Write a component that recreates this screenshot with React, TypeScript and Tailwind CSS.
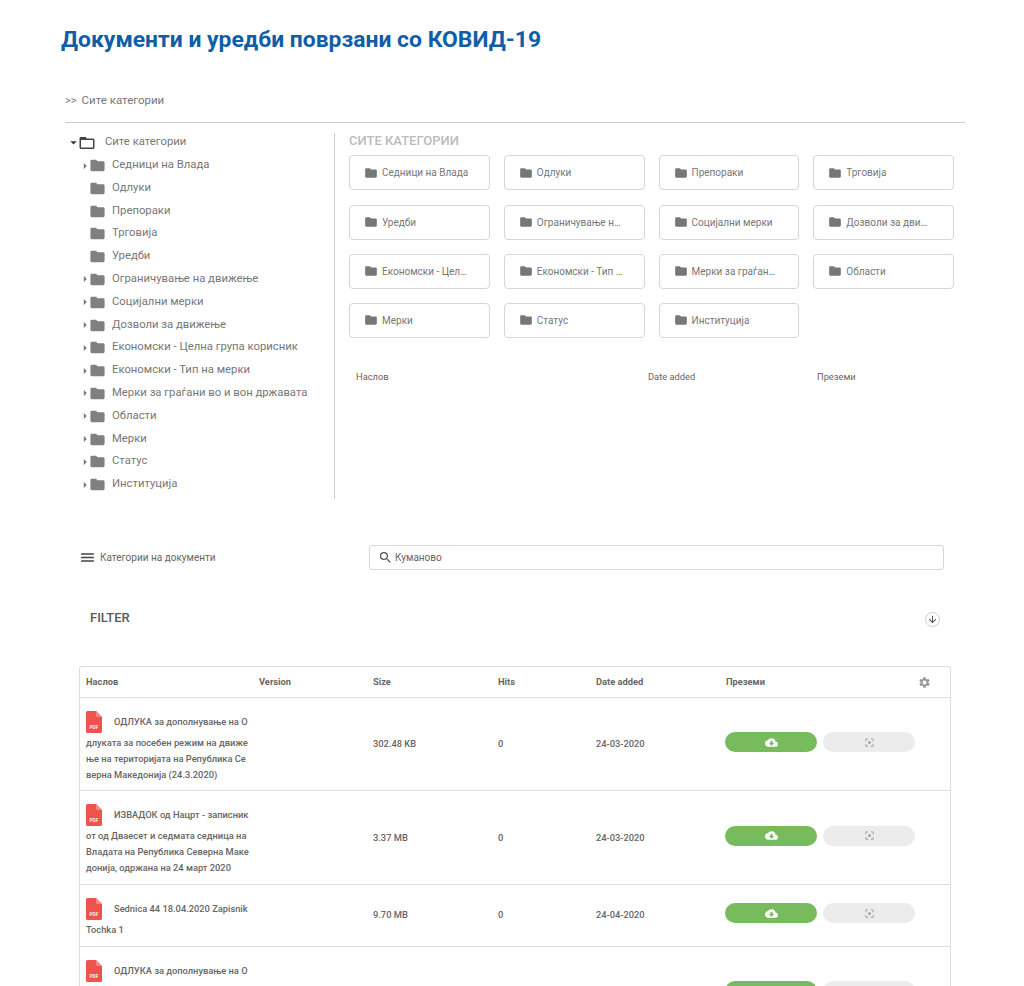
import { MdFolder, MdFolderOpen, MdArrowRight, MdArrowDropDown, MdMenu, MdSearch, MdArrowDownward, MdSettings, MdCloudDownload, MdFilterCenterFocus } from "react-icons/md";

const tree: [string, boolean][] = [
  ["Седници на Влада", true],
  ["Одлуки", false],
  ["Препораки", false],
  ["Трговија", false],
  ["Уредби", false],
  ["Ограничување на движење", true],
  ["Социјални мерки", true],
  ["Дозволи за движење", true],
  ["Економски - Целна група корисник", true],
  ["Економски - Тип на мерки", true],
  ["Мерки за граѓани во и вон државата", true],
  ["Области", true],
  ["Мерки", true],
  ["Статус", true],
  ["Институција", true],
];

const cards = [
  "Седници на Влада",
  "Одлуки",
  "Препораки",
  "Трговија",
  "Уредби",
  "Ограничување на движење",
  "Социјални мерки",
  "Дозволи за движење",
  "Економски - Целна група корисник",
  "Економски - Тип на мерки",
  "Мерки за граѓани во и вон државата",
  "Области",
  "Мерки",
  "Статус",
  "Институција",
];

const rows = [
  {
    title: "ОДЛУКА за дополнување на Одлуката за посебен режим на движење на територијата на Република Северна Македонија (24.3.2020)",
    size: "302.48 KB",
    date: "24-03-2020",
  },
  {
    title: "ИЗВАДОК од Нацрт - записник от од Дваесет и седмата седница на Владата на Република Северна Македонија, одржана на 24 март 2020",
    size: "3.37 MB",
    date: "24-03-2020",
  },
  {
    title: "Sednica 44 18.04.2020 Zapisnik Tochka 1",
    size: "9.70 MB",
    date: "24-04-2020",
  },
  {
    title: "ОДЛУКА за дополнување на Одлуката за посебен режим на движење на територијата на Република Северна Македонија (24.3.2020)",
    size: "302.48 KB",
    date: "24-03-2020",
  },
];

const cols = "grid grid-cols-[173px_114px_125px_98px_130px_1fr]";

function PdfIcon() {
  return (
    <svg width="16" height="22" viewBox="0 0 16 22" className="inline-block align-middle mr-[12px] mb-[2px]">
      <path d="M0 1.5A1.5 1.5 0 0 1 1.5 0H10l6 6v14.5a1.5 1.5 0 0 1-1.5 1.5h-13A1.5 1.5 0 0 1 0 20.500Z" fill="#ef5350" />
      <path d="M10 0l6 6h-4.500A1.500 1.500 0 0 1 10 4.500Z" fill="#f58a88" />
      <text x="8" y="18" textAnchor="middle" fontSize="5" fill="#fff" fontFamily="Roboto, sans-serif">PDF</text>
    </svg>
  );
}

export default function App() {
  return (
    <div className="h-[986px] overflow-hidden bg-white font-['Roboto',sans-serif] text-[#666]">
      <h1 className="pl-[61px] pt-[25px] text-[22.900px] leading-[30px] font-bold text-[#0f5ea8]">
        Документи и уредби поврзани со КОВИД-19
      </h1>
      <div className="ml-[65px] mt-[35px] h-[33px] w-[900px] border-b border-[#ccc] text-[11px] leading-[20px] text-[#777]">
        &gt;&gt;<span className="ml-[5px] text-[11.500px]">Сите категории</span>
      </div>

      <div className="ml-[65px] mt-[10px] flex w-[900px]">
        <div className="h-[366px] w-[270px] border-r border-[#ccc] pt-px text-[11.300px] text-[#777]">
          <div className="flex h-[17px] items-center pl-[4px]">
            <MdArrowDropDown className="ml-[-3px] text-[15px] text-[#333]" />
            <MdFolderOpen className="ml-[-3px] text-[18px] text-[#444]" />
            <span className="ml-[9px]">Сите категории</span>
          </div>
          <div className="mt-[6px] flex flex-col gap-y-[5.800px]">
            {tree.map(([name, arrow]) => (
              <div key={name} className="flex h-[17px] items-center pl-[15px]">
                <span className="flex w-[9px] justify-center">
                  {arrow && <MdArrowRight className="shrink-0 text-[14px] text-[#777]" />}
                </span>
                <MdFolder className="shrink-0 text-[17px] text-[#808080]" />
                <span className="ml-[6px] whitespace-nowrap">{name}</span>
              </div>
            ))}
          </div>
        </div>

        <div className="ml-[14px] w-[605px]">
          <div className="text-[13px] leading-[16px] font-medium text-[#bbb]">СИТЕ КАТЕГОРИИ</div>
          <div className="mt-[6.400px] grid grid-cols-4 gap-x-[14px] gap-y-[14.200px]">
            {cards.map((c) => (
              <div key={c} className="flex h-[35px] min-w-0 items-center rounded-[4px] border border-[#d5d5d5] pl-[14px] pr-[20px] text-[10px] text-[#777]">
                <MdFolder className="shrink-0 text-[14px] text-[#777]" />
                <span className="ml-[4px] truncate">{c}</span>
              </div>
            ))}
          </div>
          <div className="mt-[33px] flex text-[9.300px] leading-[12px] text-[#666]">
            <span className="ml-[7px] w-[292px]">Наслов</span>
            <span className="w-[169px]">Date added</span>
            <span>Преземи</span>
          </div>
        </div>
      </div>

      <div className="ml-[81px] mt-[46px] flex h-[25px] items-center">
        <MdMenu className="ml-[-2px] text-[17px] text-[#444]" />
        <span className="ml-[4px] w-[269px] text-[10px] text-[#666]">Категории на документи</span>
        <div className="flex h-[25px] w-[575px] items-center rounded-[3px] border border-[#d5d5d5] pl-[8px] text-[10px] text-[#666]">
          <MdSearch className="text-[15px] text-[#555]" />
          <span className="ml-[2px]">Куманово</span>
        </div>
      </div>

      <div className="relative ml-[90px] mt-[40px] text-[13px] leading-[16px] font-medium text-[#5a5a5a]">
        FILTER
        <span className="absolute left-[835px] top-[2px] flex h-[15px] w-[15px] items-center justify-center rounded-full border border-[#ccc] text-[#444]">
          <MdArrowDownward className="text-[11px]" />
        </span>
      </div>

      <div className="ml-[79px] mt-[40px] w-[872px] rounded-t-[3px] border border-b-0 border-[#ddd] text-[9.300px] font-medium text-[#666]">
        <div className={`${cols} h-[31px] items-center border-b border-[#ddd] font-bold`}>
          <span className="pl-[6px]">Наслов</span>
          <span className="pl-[6px]">Version</span>
          <span className="pl-[6px]">Size</span>
          <span className="pl-[6px]">Hits</span>
          <span className="pl-[6px]">Date added</span>
          <div className="flex items-center justify-between pl-[6px] pr-[19px]">
            <span>Преземи</span>
            <MdSettings className="text-[13px] text-[#999]" />
          </div>
        </div>
        {rows.map((r, i) => (
          <div key={i} className={`${cols} items-center border-b border-[#ddd]`}>
            <div className="break-all pb-[8.200px] pl-[6px] pr-[4px] pt-[13px] leading-[15.750px]">
              <PdfIcon />
              {r.title}
            </div>
            <span />
            <span className="pl-[6px]">{r.size}</span>
            <span className="pl-[6px]">0</span>
            <span className="pl-[6px]">{r.date}</span>
            <div className="mb-[4px] flex gap-x-[6px] pl-[5px] whitespace-nowrap">
              <span className="flex h-[20px] w-[92px] shrink-0 items-center justify-center rounded-full bg-[#77bb5d] text-[13px] text-white">
                <MdCloudDownload />
              </span>
              <span className="flex h-[20px] w-[92px] shrink-0 items-center justify-center rounded-full bg-[#ececec] text-[11px] text-[#999]">
                <MdFilterCenterFocus />
              </span>
            </div>
          </div>
        ))}
      </div>
    </div>
  );
}
